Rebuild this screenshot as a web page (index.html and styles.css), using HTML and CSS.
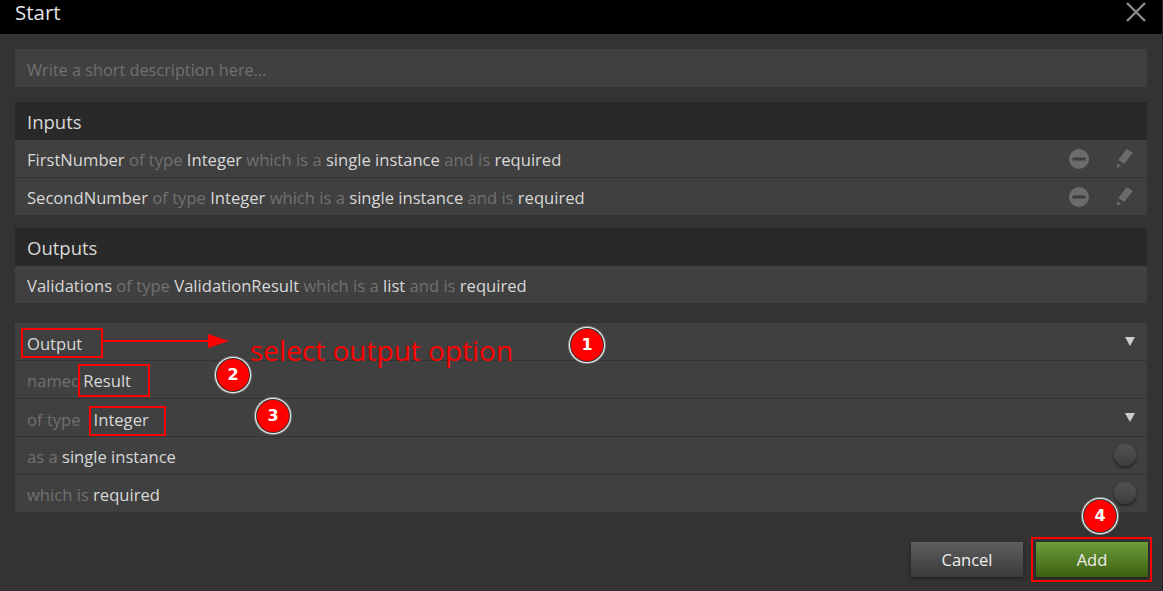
FILE: index.html
```html
<!DOCTYPE html>
<html lang="en">
<head>
    <meta charset="UTF-8">
    <meta name="viewport" content="width=device-width, initial-scale=1.0">
    <title>Start</title>
    <link rel="stylesheet" href="styles.css">
</head>
<body>

<div class="dialog">
    <div class="titlebar">
        <span class="title">Start</span>
        <svg class="close" width="20" height="20" viewBox="0 0 20 20"><path d="M1 1L19 19M19 1L1 19" stroke="#8a8a8a" stroke-width="2.4" fill="none"/></svg>
    </div>

    <div class="content">
        <div class="description">Write a short description here...</div>

        <div class="group">
            <div class="group-head">Inputs</div>
            <div class="row">
                <span class="text">FirstNumber <i>of type</i> Integer <i>which is a</i> single instance <i>and is</i> required</span>
                <svg class="remove" width="22" height="22" viewBox="0 0 22 22"><circle cx="11" cy="11" r="10" fill="#6b6b6b"/><rect x="4.5" y="9.5" width="13" height="3" fill="#3e3e3e"/></svg>
                <svg class="edit" width="18" height="22" viewBox="0 0 18 22"><path d="M10.700 1L16.700 4.700L8.300 16L2.300 12Z M1.300 15.300L5 17.700L1 20Z" fill="#6b6b6b"/></svg>
            </div>
            <div class="row">
                <span class="text">SecondNumber <i>of type</i> Integer <i>which is a</i> single instance <i>and is</i> required</span>
                <svg class="remove" width="22" height="22" viewBox="0 0 22 22"><circle cx="11" cy="11" r="10" fill="#6b6b6b"/><rect x="4.5" y="9.5" width="13" height="3" fill="#3e3e3e"/></svg>
                <svg class="edit" width="18" height="22" viewBox="0 0 18 22"><path d="M10.700 1L16.700 4.700L8.300 16L2.300 12Z M1.300 15.300L5 17.700L1 20Z" fill="#6b6b6b"/></svg>
            </div>
        </div>

        <div class="group">
            <div class="group-head">Outputs</div>
            <div class="row">
                <span class="text">Validations <i>of type</i> ValidationResult <i>which is a</i> list <i>and is</i> required</span>
            </div>
        </div>

        <div class="group form">
            <div class="row row-select">
                <span class="text">Output</span>
                <span class="caret"></span>
            </div>
            <div class="row row-input">
                <span class="text"><i>named</i><span class="value-named">Result</span></span>
            </div>
            <div class="row row-select">
                <span class="text"><i>of type</i><span class="value-type">Integer</span></span>
                <span class="caret"></span>
            </div>
            <div class="row">
                <span class="text"><i>as a</i> single instance</span>
                <span class="toggle"></span>
            </div>
            <div class="row">
                <span class="text"><i>which is</i> required</span>
                <span class="toggle"></span>
            </div>
        </div>

        <div class="actions">
            <button class="btn cancel">Cancel</button>
            <button class="btn add">Add</button>
        </div>
    </div>
</div>

<!-- red notes drawn on top of the screenshot -->
<div class="mark mark-output"></div>
<div class="mark mark-result"></div>
<div class="mark mark-type"></div>
<div class="mark mark-add"></div>
<svg class="arrow" width="130" height="20" viewBox="0 0 130 20"><path d="M0 10H106" stroke="#f00" stroke-width="2"/><path d="M105 3L126 10L105 17Z" fill="#f00"/></svg>
<div class="note">select output option</div>
<div class="badge badge-1">1</div>
<div class="badge badge-2">2</div>
<div class="badge badge-3">3</div>
<div class="badge badge-4">4</div>

</body>
</html>
```

FILE: styles.css
```css
* {
    box-sizing: border-box;
}

body {
    margin: 0;
    height: 591px;
    overflow: hidden;
    position: relative;
    background: #333;
    font-family: 'Open Sans', sans-serif;
    font-size: 16.6px;
    color: #d8d8d8;
}

.dialog {
    height: 591px;
    border-right: 1px solid #222;
}

.titlebar {
    height: 34px;
    background: #000;
    display: flex;
    align-items: center;
    justify-content: space-between;
    padding: 0 16px 0 15px;
}

.title {
    font-size: 20.5px;
    color: #e4e4e4;
    margin-top: -10px;
}

.close {
    margin-top: -10px;
}

.content {
    padding: 15px 15px 0;
}

.description {
    height: 38px;
    line-height: 38px;
    padding: 2px 12px 0;
    background: #404040;
    color: #707070;
    font-size: 16.3px;
    margin-bottom: 15px;
}

.group {
    margin-bottom: 13px;
}

.group-head {
    height: 38px;
    line-height: 38px;
    padding: 1px 12px 0;
    background: #292929;
    font-size: 18.5px;
}

.row {
    height: 38px;
    display: flex;
    align-items: center;
    padding: 0 12px;
    background: #404040;
    border-bottom: 1px solid #333;
}

.row:last-child {
    height: 37px;
    border-bottom: none;
}

.text {
    flex: 1;
    white-space: nowrap;
    padding-top: 2px;
}

.text i {
    font-style: normal;
    color: #707070;
}

.row-select .text {
    padding-top: 4px;
}

.row-input .text {
    padding-top: 2px;
}

.value-named {
    margin-left: 2px;
}

.value-type {
    margin-left: 13px;
}

.remove {
    margin-right: 26px;
}

.edit {
    margin-right: 1px;
}

.form {
    margin-top: 20px;
    margin-bottom: 30px;
}

.caret {
    width: 0;
    height: 0;
    border-left: 5px solid transparent;
    border-right: 5px solid transparent;
    border-top: 9px solid #ccc;
}

.toggle {
    width: 22px;
    height: 22px;
    margin: -2px -1px 0 0;
    border-radius: 50%;
    background: linear-gradient(#525252, #3e3e3e);
    box-shadow: 0 2px 3px #222;
}

.actions {
    display: flex;
    justify-content: flex-end;
    gap: 13px;
    margin-right: -1px;
}

.btn {
    width: 112px;
    height: 35px;
    border: none;
    padding: 0;
    font: 16.5px 'Open Sans', sans-serif;
    color: #eee;
    box-shadow: 0 2px 4px #222;
}

.cancel {
    background: linear-gradient(#5e5e5e, #3a3a3a);
}

.add {
    background: linear-gradient(#6d9c38, #3c5f10);
}

.mark {
    position: absolute;
    border: 2px solid #f00;
}

.mark-output { left: 21px; top: 328px; width: 82px; height: 30px; }
.mark-result { left: 78px; top: 364px; width: 72px; height: 33px; }
.mark-type { left: 89px; top: 406px; width: 77px; height: 30px; }
.mark-add { left: 1031px; top: 537px; width: 121px; height: 45px; }

.arrow {
    position: absolute;
    left: 103px;
    top: 331px;
}

.note {
    position: absolute;
    left: 250px;
    top: 331px;
    font-size: 28px;
    line-height: 38px;
    color: #f00;
    white-space: nowrap;
}

.badge {
    position: absolute;
    width: 32px;
    height: 32px;
    line-height: 32px;
    text-align: center;
    border-radius: 50%;
    background: #f00;
    color: #fff;
    font-family: 'DejaVu Sans', sans-serif;
    font-weight: bold;
    font-size: 16px;
    box-shadow: 0 0 0 1px #333, 0 0 0 2px #eee, 0 0 0 3px #888;
}

.badge-1 { left: 571px; top: 329px; }
.badge-2 { left: 217px; top: 359px; }
.badge-3 { left: 257px; top: 400px; }
.badge-4 { left: 1084px; top: 500px; }
```
